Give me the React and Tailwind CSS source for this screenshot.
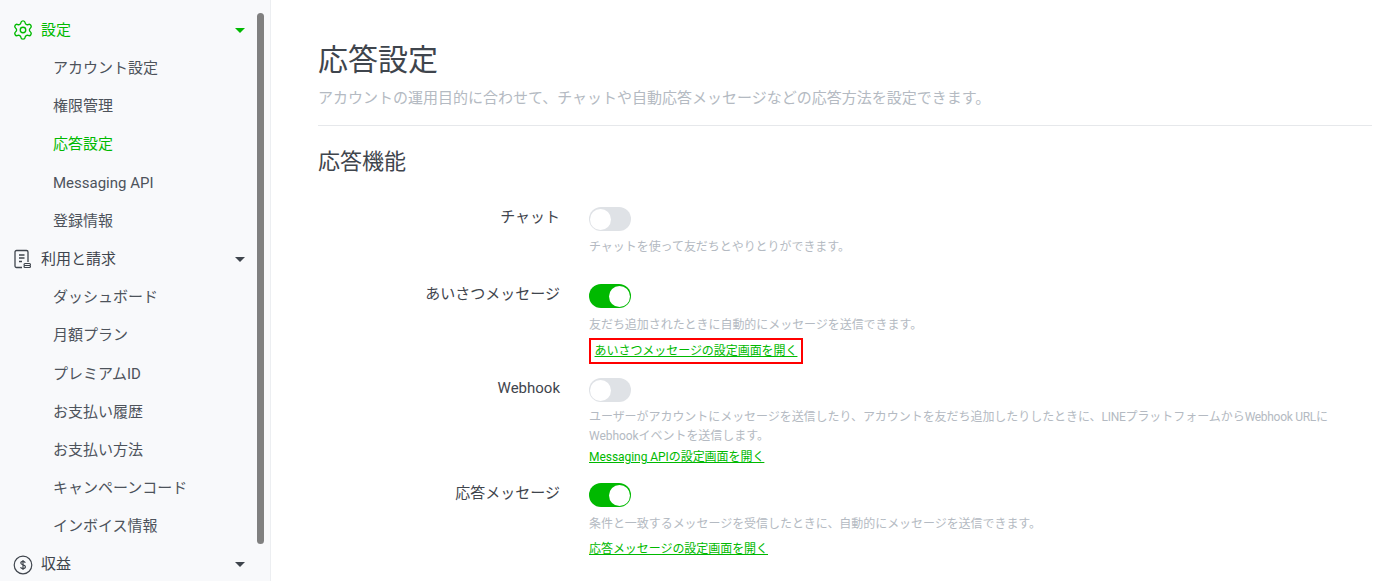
import React from 'react';
import { Settings } from 'lucide-react';

const FONT = 'Roboto, "Noto Sans CJK JP", "Noto Sans", sans-serif';

function BillIcon() {
  return (
    <svg width="20" height="20" viewBox="0 0 20 20" fill="none" stroke="currentColor" strokeWidth="1.300">
      <path d="M9 18.500H3.500A1.500 1.500 0 0 1 2 17V3A1.500 1.500 0 0 1 3.500 1.500h10A1.500 1.500 0 0 1 15 3v10" />
      <path d="M6 6h5.500M6 9h5.500M6 12.500h3" />
      <rect x="11" y="14.500" width="6.500" height="2" rx="1" strokeWidth="1.100" />
      <rect x="11" y="16.500" width="6.500" height="2" rx="1" strokeWidth="1.100" />
    </svg>
  );
}

function DollarIcon() {
  return (
    <svg width="20" height="20" viewBox="0 0 20 20" fill="none" stroke="currentColor" strokeWidth="1.200">
      <circle cx="10" cy="10" r="8.800" />
      <path d="M12.300 7.700c-.4-.9-1.200-1.300-2.300-1.300-1.300 0-2.200.6-2.200 1.700 0 2.300 4.600 1.200 4.600 3.700 0 1.100-1 1.800-2.400 1.800-1.200 0-2.100-.5-2.500-1.400M10 5v10" />
    </svg>
  );
}

function Caret({ green }) {
  return (
    <span className={`w-0 h-0 border-x-[5px] border-x-transparent border-t-[5px] ${green ? 'border-t-[#00b900]' : 'border-t-[#3f454d]'}`} />
  );
}

function Section({ icon, label, active }) {
  return (
    <div className={`h-[38.2px] flex items-center pl-[13px] pr-[25px] ${active ? 'text-[#00b900]' : 'text-[#3f454d]'}`}>
      <span className="w-5 h-5 flex items-center justify-center">{icon}</span>
      <span className="ml-2 flex-1 text-[15px]">{label}</span>
      <Caret green={active} />
    </div>
  );
}

function Item({ label, active }) {
  return (
    <div className={`h-[38.2px] flex items-center pl-[53px] text-[15px] ${active ? 'text-[#00b900]' : 'text-[#4d535b]'}`}>
      {label}
    </div>
  );
}

function Toggle({ on }) {
  return (
    <div className={`w-[42px] h-[24px] rounded-full flex items-center p-[1px] ${on ? 'bg-[#00b900] justify-end' : 'bg-[#dfe2e6] justify-start'}`}>
      <span className="w-[21px] h-[21px] rounded-full bg-white" />
    </div>
  );
}

function Row({ label, on, className, children }) {
  return (
    <div className={`flex ${className}`}>
      <div className="w-[242px] text-right text-[15px] text-[#3f454d] leading-[20px]">{label}</div>
      <div className="ml-[29px] flex-1">
        <Toggle on={on} />
        {children}
      </div>
    </div>
  );
}

function Note({ children, className }) {
  return <p className={`text-[12px] tracking-[-0.05px] text-[#b4bac2] ${className || ''}`}>{children}</p>;
}

function Link({ children, className }) {
  return <a className={`text-[12px] tracking-[-0.05px] leading-[18px] text-[#00b900] underline ${className || ''}`}>{children}</a>;
}

export default function App() {
  return (
    <div className="relative w-[1400px] h-[581px] overflow-hidden flex bg-white" style={{ fontFamily: FONT }}>
      <aside className="relative w-[271px] h-full shrink-0 bg-[#f8f9fb] border-r border-[#eceef1] pt-[11px] overflow-hidden">
        <Section icon={<Settings size={22} strokeWidth={1.5} className="shrink-0" />} label="設定" active />
        <Item label="アカウント設定" />
        <Item label="権限管理" />
        <Item label="応答設定" active />
        <Item label="Messaging API" />
        <Item label="登録情報" />
        <Section icon={<BillIcon />} label="利用と請求" />
        <Item label="ダッシュボード" />
        <Item label="月額プラン" />
        <Item label="プレミアムID" />
        <Item label="お支払い履歴" />
        <Item label="お支払い方法" />
        <Item label="キャンペーンコード" />
        <Item label="インボイス情報" />
        <Section icon={<DollarIcon />} label="収益" />
        {/* scrollbar */}
        <div className="absolute left-[257px] top-[13px] w-[7px] h-[531px] rounded-full bg-[#808080]" />
      </aside>

      <main className="flex-1 pl-[47px] pr-[28px]">
        <h1 className="mt-[40px] text-[30px] leading-[40px] text-[#3f454d]">応答設定</h1>
        <p className="mt-[8px] text-[15px] leading-[20px] text-[#b4bac2]">
          アカウントの運用目的に合わせて、チャットや自動応答メッセージなどの応答方法を設定できます。
        </p>
        <div className="mt-[17px] border-t border-[#e6e8eb]" />
        <h2 className="mt-[21px] text-[22px] leading-[30px] text-[#3f454d]">応答機能</h2>

        <Row label="チャット" on={false} className="mt-[30px]">
          <Note className="mt-[7px] leading-[19px]">チャットを使って友だちとやりとりができます。</Note>
        </Row>
        <Row label="あいさつメッセージ" on className="mt-[27px]">
          <Note className="mt-[8px] leading-[19px]">友だち追加されたときに自動的にメッセージを送信できます。</Note>
          <div className="mt-[3px] w-[214px] h-[26px] border-2 border-[#ff0000] flex items-center justify-center">
            <Link>あいさつメッセージの設定画面を開く</Link>
          </div>
        </Row>
        <Row label="Webhook" on={false} className="mt-[14px]">
          <Note className="mt-[6px] leading-[19px]">
            ユーザーがアカウントにメッセージを送信したり、アカウントを友だち追加したりしたときに、<span className="tracking-[-0.3px]">LINE</span>プラットフォームから<span className="tracking-[-0.3px]">Webhook URL</span>に
            <br />
            Webhookイベントを送信します。
          </Note>
          <Link className="block mt-[2px]">Messaging APIの設定画面を開く</Link>
        </Row>
        <Row label="応答メッセージ" on className="mt-[17px]">
          <Note className="mt-[8px] leading-[19px]">条件と一致するメッセージを受信したときに、自動的にメッセージを送信できます。</Note>
          <Link className="block mt-[6px]">応答メッセージの設定画面を開く</Link>
        </Row>
      </main>
    </div>
  );
}
